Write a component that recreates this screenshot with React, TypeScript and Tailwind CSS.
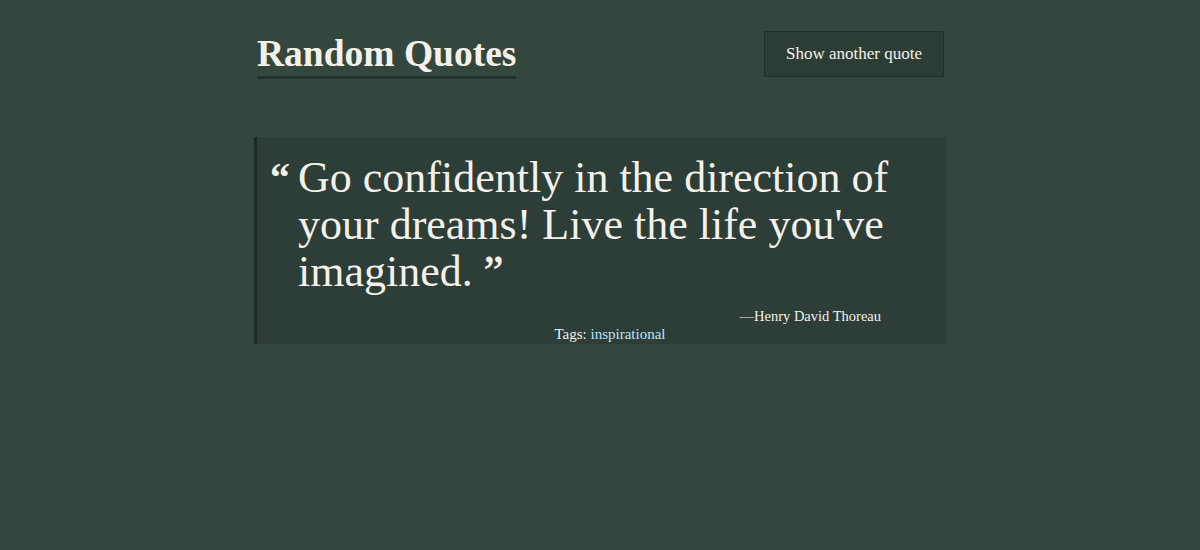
import { useState } from 'react';

const quotes = [
  {
    text: "Go confidently in the direction of your dreams! Live the life you've imagined.",
    author: 'Henry David Thoreau',
    tags: ['inspirational'],
  },
];

function App() {
  const [index, setIndex] = useState(0);
  const quote = quotes[index];

  return (
    <div className="min-h-screen bg-[#33473e] text-[#f4f1ea] font-['Liberation_Serif',serif]">
      <div className="w-[692px] mx-auto pt-[30px]">
        {/* Header */}
        <header className="flex items-start justify-between">
          <h1 className="ml-[3px] mt-[3px] text-[37.5px] leading-[42px] font-bold border-b-[3px] border-[#24332c] pb-[1px]">
            Random Quotes
          </h1>
          <button
            className="mr-[2px] mt-[1px] w-[180px] h-[46px] bg-[#2c3d36] border border-[#22302a] rounded-[2px] text-[17px] text-[#f4f1ea]"
            onClick={() => setIndex((index + 1) % quotes.length)}
          >
            Show another quote
          </button>
        </header>

        {/* Quote card */}
        <blockquote className="mt-[58px] bg-[#2c3e37] border-l-[3px] border-[#1f2c26] pl-[13px] pr-[40px] pt-[17px]">
          <div className="flex">
            <span className="w-[28px] shrink-0 text-[40px] leading-[48px] font-bold">“</span>
            <p className="text-[44px] leading-[47px] [-webkit-text-stroke:0.8px_#f4f1ea]">
              <span className="[-webkit-text-stroke:0]">{quote.text}</span> ”
            </p>
          </div>
          <p className="text-right pr-[25px] mt-[12px] text-[14.5px] leading-[18px]">—{quote.author}</p>
          <p className="text-center pl-[44px] text-[15px] leading-[19px]">
            Tags: <span className="text-[#bfe3f5]">{quote.tags.join(', ')}</span>
          </p>
        </blockquote>
      </div>
    </div>
  );
}

export default App;
